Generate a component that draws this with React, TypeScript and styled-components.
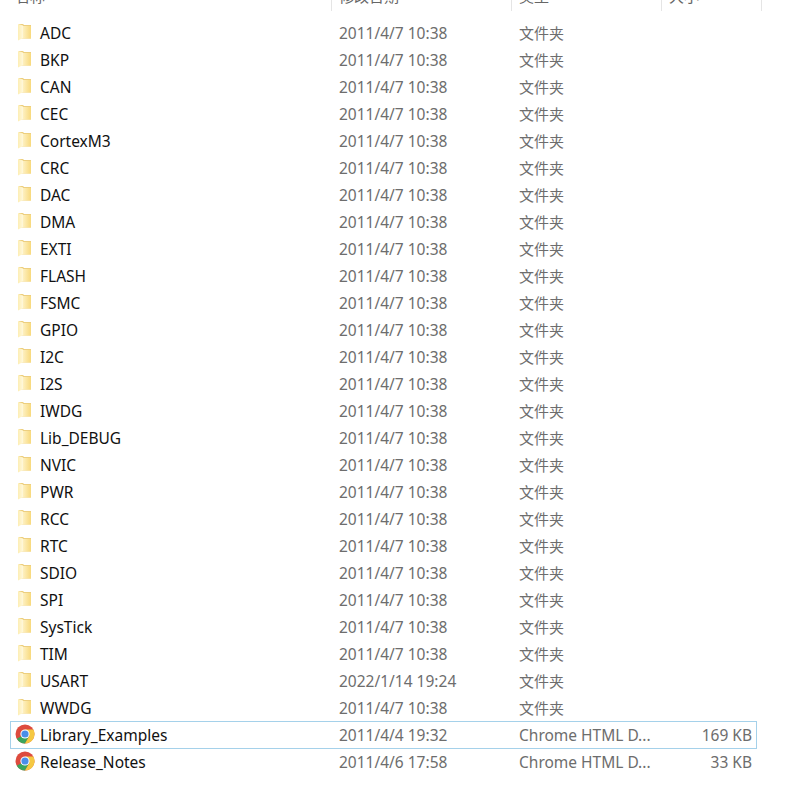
import React from "react";
import styled, { createGlobalStyle } from "styled-components";

const Global = createGlobalStyle`
  html, body { margin: 0; padding: 0; background: #fff; }
  body { font-family: "Noto Sans", "Noto Sans CJK SC", sans-serif; }
`;

const Page = styled.div`
  width: 801px;
  height: 792px;
  overflow: hidden;
  background: #fff;
`;

const Header = styled.div`
  display: grid;
  grid-template-columns: 331px 180px 150px 100px;
  height: 11px;
  overflow: hidden;
`;

const HeaderCell = styled.div<{ $first?: boolean }>`
  height: 11px;
  padding-left: ${(p) => (p.$first ? "15px" : "7px")};
  border-left: ${(p) => (p.$first ? "none" : "1px solid #e5e5e5")};
  font-size: 15px;
  line-height: 20px;
  color: #666;
  overflow: hidden;
  & > span {
    display: block;
    margin-top: -14px;
  }
`;

const EndRule = styled.div`
  width: 1px;
  height: 11px;
  background: #e5e5e5;
`;

const HeaderWrap = styled.div`
  display: flex;
`;

const List = styled.div`
  display: flex;
  flex-direction: column;
  margin: 8px 0 0 10px;
  width: 747px;
`;

const Row = styled.div<{ $selected?: boolean }>`
  box-sizing: border-box;
  height: ${(p) => (p.$selected ? "28px" : "27px")};
  margin-bottom: ${(p) => (p.$selected ? "-1px" : "0")};
  display: grid;
  grid-template-columns: 328px 180px 150px 1fr;
  align-items: center;
  border: 1px solid ${(p) => (p.$selected ? "#a5d1ea" : "transparent")};
  padding: ${(p) => (p.$selected ? "1px" : "2px")} 4px 0 0;
  font-size: 15.5px;
  line-height: 23px;
  white-space: nowrap;
`;

const NameCell = styled.div`
  display: flex;
  align-items: center;
  color: #111;
`;

const IconSlot = styled.span`
  width: 29px;
  height: 20px;
  margin-top: -3px;
  display: flex;
  align-items: center;
  padding-left: 4px;
  box-sizing: border-box;
  flex: none;
`;

const MetaCell = styled.div<{ $cjk?: boolean }>`
  color: #6d6d6d;
  font-size: ${(p) => (p.$cjk ? "15px" : "15.5px")};
`;

const SizeCell = styled.div`
  color: #6d6d6d;
  text-align: right;
`;

const FolderIcon = () => (
  <svg width="15" height="18" viewBox="0 0 15 18" style={{ marginLeft: 2 }}>
    <defs>
      <linearGradient id="folderFront" x1="0" x2="1" y1="0" y2="0">
        <stop offset="0" stopColor="#fff6d2" />
        <stop offset="1" stopColor="#f8d97c" />
      </linearGradient>
      <linearGradient id="folderFlap" x1="0" x2="1" y1="0" y2="0">
        <stop offset="0" stopColor="#fdeeb4" />
        <stop offset="1" stopColor="#fff8dc" />
      </linearGradient>
    </defs>
    <path d="M2 1h4l1 1h7v13.5H2z" fill="#edcf7f" />
    <path d="M4 3h10v12.5H4z" fill="url(#folderFront)" />
    <path d="M1 1l5 1.5v12.5l-5 2.5z" fill="url(#folderFlap)" />
  </svg>
);

const ChromeIcon = () => (
  <svg width="20" height="20" viewBox="0 0 20 20" style={{ marginTop: -1 }}>
    <circle cx="10" cy="10" r="9.5" fill="#dd4b3e" />
    <path d="M10 10 1.8 14.8A9.5 9.5 0 0 0 10 19.5l4.8-8.2z" fill="#3ba55c" />
    <path d="M10 5.5h8.4A9.5 9.5 0 0 1 10 19.5l4.3-7.5z" fill="#f5c842" />
    <circle cx="10" cy="10" r="4.6" fill="#fff" />
    <circle cx="10" cy="10" r="3.6" fill="#4a8ee8" />
  </svg>
);

type Item = { name: string; date: string; type: string; size?: string; chrome?: boolean; selected?: boolean };

const d = "2011/4/7 10:38";
const folders = [
  "ADC", "BKP", "CAN", "CEC", "CortexM3", "CRC", "DAC", "DMA", "EXTI", "FLASH", "FSMC", "GPIO", "I2C", "I2S",
  "IWDG", "Lib_DEBUG", "NVIC", "PWR", "RCC", "RTC", "SDIO", "SPI", "SysTick", "TIM", "USART", "WWDG",
];

const items: Item[] = [
  ...folders.map((name) => ({ name, date: name === "USART" ? "2022/1/14 19:24" : d, type: "文件夹" })),
  { name: "Library_Examples", date: "2011/4/4 19:32", type: "Chrome HTML D...", size: "169 KB", chrome: true, selected: true },
  { name: "Release_Notes", date: "2011/4/6 17:58", type: "Chrome HTML D...", size: "33 KB", chrome: true },
];

export default function App() {
  return (
    <Page>
      <Global />
      <HeaderWrap>
        <Header>
          <HeaderCell $first><span>名称</span></HeaderCell>
          <HeaderCell><span>修改日期</span></HeaderCell>
          <HeaderCell><span>类型</span></HeaderCell>
          <HeaderCell><span>大小</span></HeaderCell>
        </Header>
        <EndRule />
      </HeaderWrap>
      <List>
        {items.map((it) => (
          <Row key={it.name} $selected={it.selected}>
            <NameCell>
              <IconSlot>{it.chrome ? <ChromeIcon /> : <FolderIcon />}</IconSlot>
              {it.name}
            </NameCell>
            <MetaCell>{it.date}</MetaCell>
            <MetaCell $cjk={!it.chrome}>{it.type}</MetaCell>
            <SizeCell>{it.size}</SizeCell>
          </Row>
        ))}
      </List>
    </Page>
  );
}
